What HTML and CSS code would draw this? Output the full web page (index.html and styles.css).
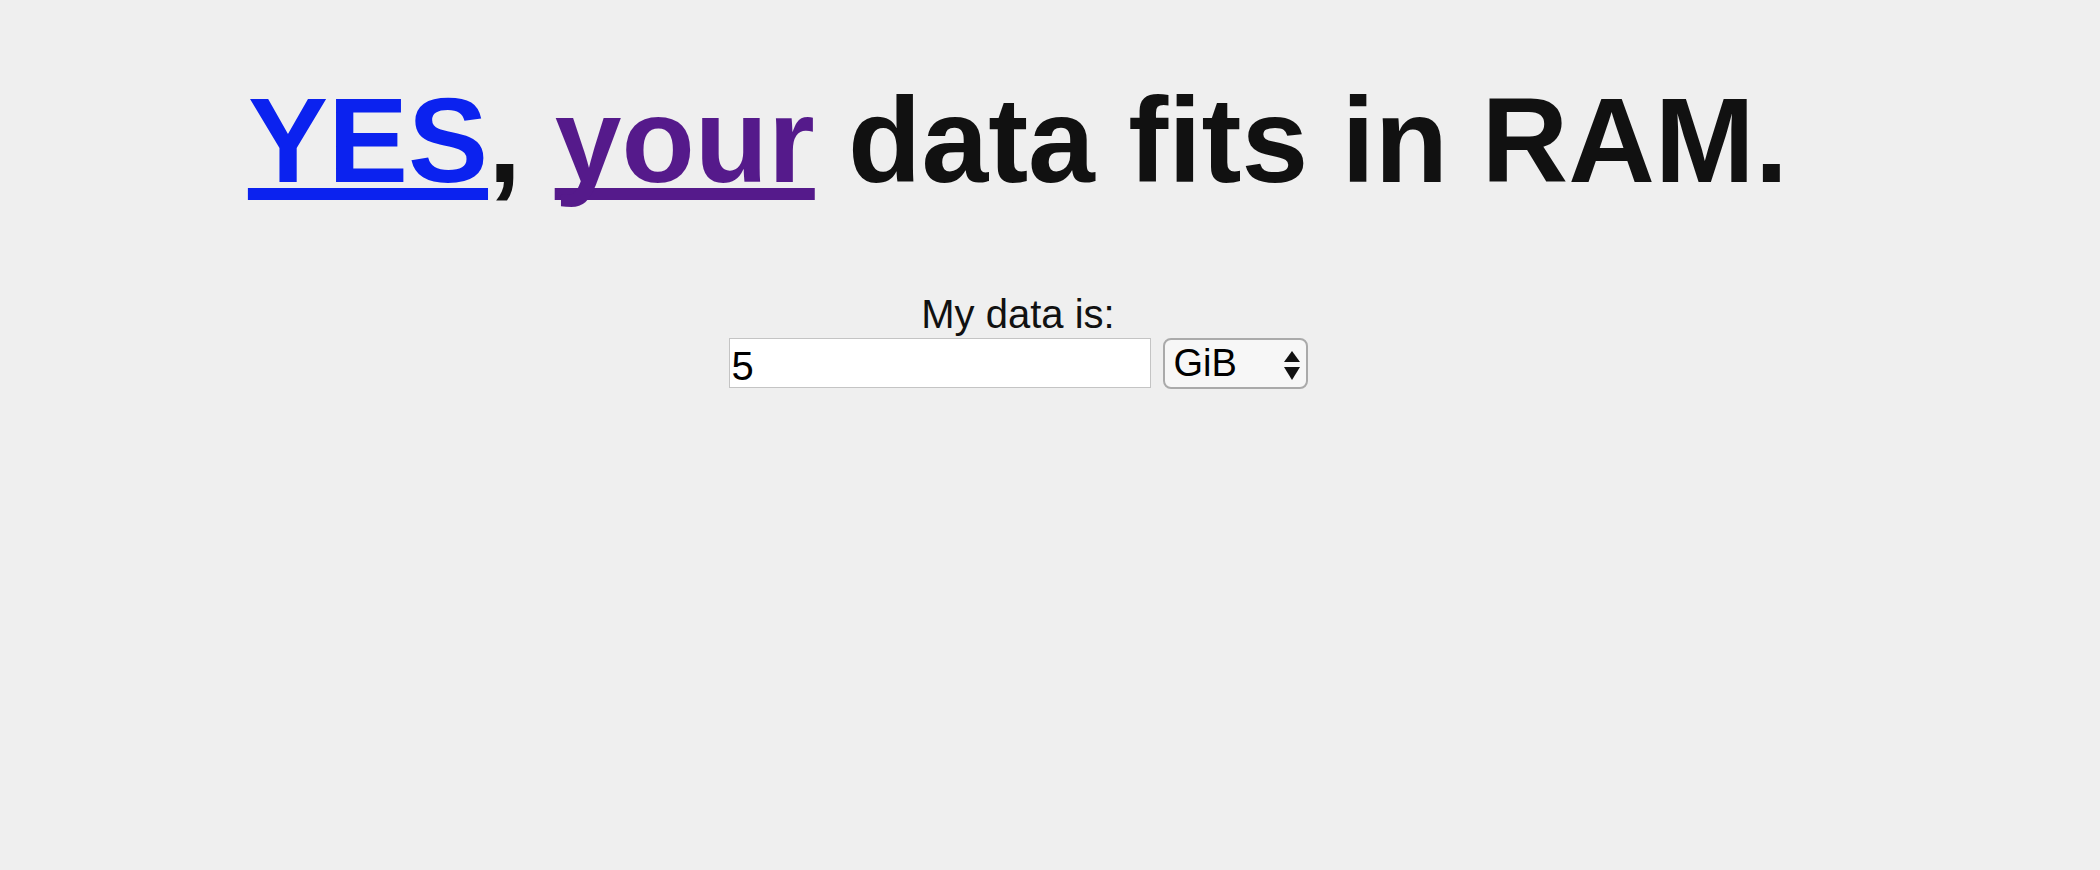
FILE: index.html
```html
<!DOCTYPE html>
<html lang="en">
  <head>
    <meta charset="UTF-8" />
    <meta name="viewport" content="width=device-width, initial-scale=1.0" />
    <title>Yes, your data fits in RAM</title>
    <link rel="stylesheet" href="styles.css">
  </head>
  <body>
    <main class="page">
      <h1><a class="yes" href="#">YES</a>, <a class="your" href="#">your</a> data fits in RAM.</h1>

      <form class="size-form">
        <label for="size">My data is:</label>
        <div class="row">
          <input type="text" id="size" value="5" />
          <span class="unit">
            <select id="unit">
              <option>KiB</option>
              <option>MiB</option>
              <option selected>GiB</option>
              <option>TiB</option>
              <option>PiB</option>
            </select>
            <svg class="arrows" width="16" height="30" viewBox="0 0 16 30" aria-hidden="true">
              <path d="M8 0 L16 11 L0 11 Z" />
              <path d="M0 16 L16 16 L8 29 Z" />
            </svg>
          </span>
        </div>
      </form>
    </main>
  </body>
</html>
```

FILE: styles.css
```css
html,
body {
  margin: 0;
  padding: 0;
  background: #efefef;
  color: #111;
  font-family: "Liberation Sans", Arial, sans-serif;
}

.page {
  width: 2036px;
  text-align: center;
}

h1 {
  margin: 80px 0 0;
  font-size: 120px;
  line-height: 120px;
  font-weight: bold;
}

h1 a {
  text-decoration: underline;
  text-decoration-thickness: 12px;
  text-underline-offset: 6px;
  text-decoration-skip-ink: none;
}

.yes {
  color: #0b22ef;
}

.your {
  color: #551a8b;
}

.size-form {
  margin-top: 94px;
}

.size-form label {
  display: block;
  font-size: 40px;
  line-height: 40px;
  margin-bottom: 4px;
}

.row {
  display: flex;
  justify-content: center;
  gap: 12px;
}

.row input {
  box-sizing: border-box;
  width: 422px;
  height: 50px;
  margin: 0;
  padding: 7px 2px 1px;
  border: 1px solid #c4c4c4;
  background: #fff;
  color: #000;
  font-family: "Liberation Sans", Arial, sans-serif;
  font-size: 40px;
  line-height: 40px;
  outline: none;
}

.unit {
  position: relative;
  display: block;
}

.unit select {
  appearance: none;
  -webkit-appearance: none;
  box-sizing: border-box;
  width: 145px;
  height: 51px;
  margin: 0;
  padding: 4px 0 5px 9px;
  border: 2px solid #aaa;
  border-radius: 8px;
  background: #f7f7f7;
  color: #000;
  font-family: "Liberation Sans", Arial, sans-serif;
  font-size: 38px;
  line-height: 38px;
}

.arrows {
  position: absolute;
  right: 8px;
  top: 13px;
  pointer-events: none;
  fill: #111;
}
```
